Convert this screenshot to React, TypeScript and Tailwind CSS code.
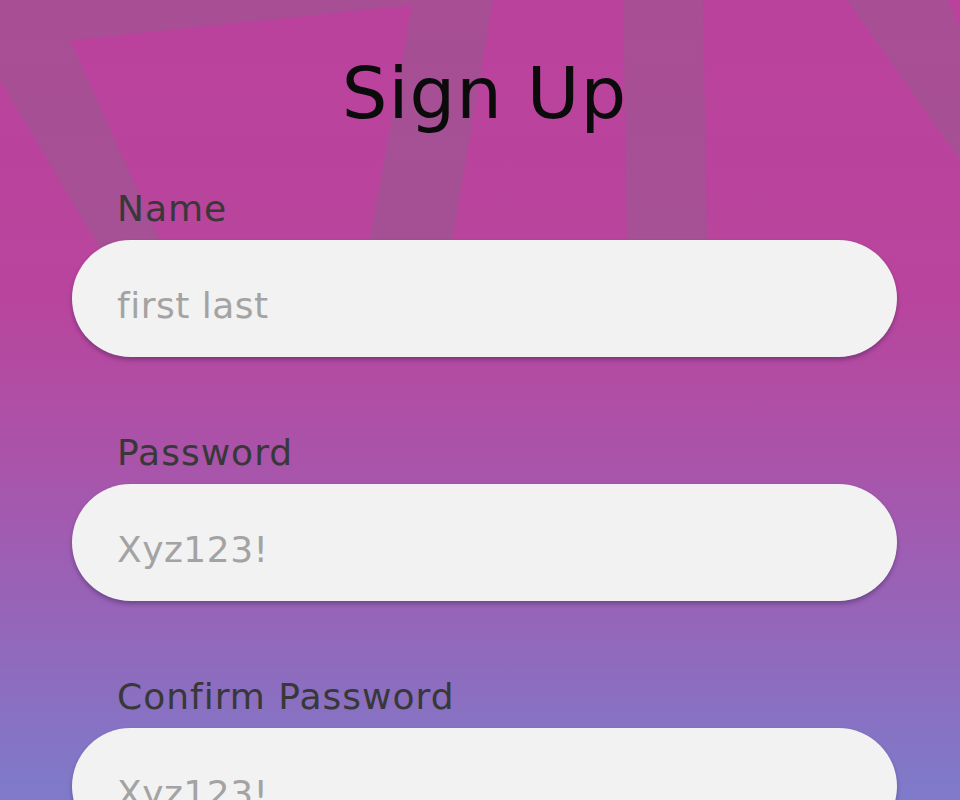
import { useState } from 'react'

type Field = {
  label: string
  placeholder: string
  type: string
}

const fields: Field[] = [
  { label: 'Name', placeholder: 'first last', type: 'text' },
  { label: 'Password', placeholder: 'Xyz123!', type: 'password' },
  { label: 'Confirm Password', placeholder: 'Xyz123!', type: 'password' },
]

function Backdrop() {
  return (
    <svg
      className="absolute inset-0 h-full w-full pointer-events-none"
      viewBox="0 0 960 800"
      preserveAspectRatio="none"
    >
      <g fill="#6e7480" opacity="0.25">
        <polygon points="0,0 416,0 413,5 70,40 187,300 131,300 0,80" />
        <polygon points="413,0 493,0 442,300 359,300" />
        <polygon points="623,0 703,0 708,300 628,300" />
        <polygon points="847,0 948,0 960,30 960,160" />
      </g>
    </svg>
  )
}

export default function App() {
  const [values, setValues] = useState<string[]>(['', '', ''])

  return (
    <div className="relative h-[800px] w-full overflow-hidden bg-[linear-gradient(180deg,#bb429c_0%,#b8459d_38%,#a954aa_58%,#9466ba_78%,#7e7bca_100%)] font-['DejaVu_Sans',sans-serif]">
      <Backdrop />

      <div className="relative pl-[72px] pr-[63px] pt-[57px]">
        <h1 className="text-center text-[72px] leading-none font-normal tracking-[1px] text-[#0b0b0b]">
          Sign Up
        </h1>

        <form className="mt-[62px] flex flex-col gap-[78px]" onSubmit={(e) => e.preventDefault()}>
          {fields.map((f, i) => (
            <label key={f.label} className="flex flex-col gap-[13px]">
              <span className="pl-[45px] text-[36px] leading-none tracking-[1px] text-[#383838]">{f.label}</span>
              <input
                type={f.type}
                value={values[i]}
                placeholder={f.placeholder}
                onChange={(e) => {
                  const next = [...values]
                  next[i] = e.target.value
                  setValues(next)
                }}
                className="h-[117px] w-full rounded-full bg-[#f2f2f2] pl-[45px] pr-8 pt-[14px] text-[36px] tracking-[0.5px] text-[#333] placeholder:text-[#a3a3a3] shadow-[0_3px_4px_rgba(40,20,60,0.35)] outline-none"
              />
            </label>
          ))}
        </form>
      </div>
    </div>
  )
}
